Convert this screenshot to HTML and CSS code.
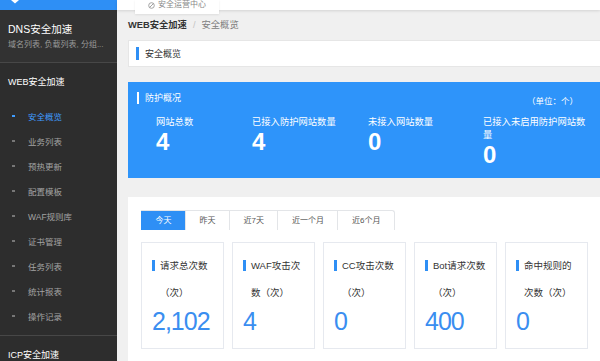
FILE: index.html
```html
<!DOCTYPE html>
<html lang="zh-CN">
<head>
<meta charset="utf-8">
<title>安全概览</title>
<link rel="stylesheet" href="styles.css">
</head>
<body>
<div class="app">
  <aside class="sidebar">
    <div class="logo-bar">
      <svg class="logo-icon" width="8" height="4" viewBox="0 0 8 4"><path d="M0 0 H8 L4 3.5 Z" fill="#fff"/></svg>
    </div>
    <div class="dns">
      <div class="group-title">DNS安全加速</div>
      <div class="dns-sub">域名列表, 负载列表, 分组...</div>
    </div>
    <div class="web">
      <div class="group-title">WEB安全加速</div>
      <ul class="menu">
        <li class="active"><span class="dot"></span>安全概览</li>
        <li><span class="dot"></span>业务列表</li>
        <li><span class="dot"></span>预热更新</li>
        <li><span class="dot"></span>配置模板</li>
        <li><span class="dot"></span>WAF规则库</li>
        <li><span class="dot"></span>证书管理</li>
        <li><span class="dot"></span>任务列表</li>
        <li><span class="dot"></span>统计报表</li>
        <li><span class="dot"></span>操作记录</li>
      </ul>
    </div>
    <div class="icp">ICP安全加速</div>
  </aside>
  <main class="main">
    <header class="topbar">
      <div class="topbar-tab">
        <svg width="7" height="7" viewBox="0 0 7 7"><circle cx="3.5" cy="3.5" r="2.8" fill="none" stroke="#999" stroke-width="0.9"/><path d="M1.5 5.5 L5.5 1.5" stroke="#999" stroke-width="0.9"/></svg>
        <span>安全运营中心</span>
      </div>
    </header>
    <div class="content">
      <div class="breadcrumb"><b>WEB安全加速</b><span class="sep">/</span><span>安全概览</span></div>
      <div class="page-title"><span class="bar"></span>安全概览</div>
      <section class="overview">
        <div class="ov-head">
          <div class="ov-title">防护概况</div>
          <div class="ov-unit">（单位：个）</div>
        </div>
        <div class="ov-stats">
          <div><div class="ov-label">网站总数</div><div class="ov-num">4</div></div>
          <div><div class="ov-label">已接入防护网站数量</div><div class="ov-num">4</div></div>
          <div><div class="ov-label">未接入网站数量</div><div class="ov-num">0</div></div>
          <div><div class="ov-label">已接入未启用防护网站数量</div><div class="ov-num">0</div></div>
        </div>
      </section>
      <section class="stats-panel">
        <div class="tabs">
          <div class="tab active">今天</div>
          <div class="tab">昨天</div>
          <div class="tab">近7天</div>
          <div class="tab">近一个月</div>
          <div class="tab">近6个月</div>
        </div>
        <div class="cards">
          <div class="card"><div class="card-title"><span class="bar"></span><span>请求总次数<br>（次）</span></div><div class="card-num">2,102</div></div>
          <div class="card"><div class="card-title"><span class="bar"></span><span>WAF攻击次<br>数（次）</span></div><div class="card-num">4</div></div>
          <div class="card"><div class="card-title"><span class="bar"></span><span>CC攻击次数<br>（次）</span></div><div class="card-num">0</div></div>
          <div class="card"><div class="card-title"><span class="bar"></span><span>Bot请求次数<br>（次）</span></div><div class="card-num">400</div></div>
          <div class="card"><div class="card-title"><span class="bar"></span><span>命中规则的<br>次数（次）</span></div><div class="card-num">0</div></div>
        </div>
      </section>
    </div>
  </main>
</div>
</body>
</html>
```
FILE: styles.css
```css
* { box-sizing: border-box; margin: 0; padding: 0; }
html, body { width: 600px; height: 361px; overflow: hidden; }
body {
  font-family: "Liberation Sans", "Noto Sans CJK SC", sans-serif;
  background: #f0f0f0;
}
.app { display: flex; height: 361px; }

/* sidebar */
.sidebar { width: 117px; flex: none; background: #2d2d2d; color: #fff; overflow: hidden; }
.logo-bar { height: 10px; background: #2e8ff5; padding-left: 11px; display: flex; align-items: flex-start; }
.logo-icon { display: block; }
.dns { background: #323232; padding: 12px 0 10px 8px; border-bottom: 1px solid #474747; }
.group-title { font-size: 10.5px; line-height: 14px; color: #fff; white-space: nowrap; }
.dns-sub { margin-top: 2px; font-size: 8px; line-height: 14px; color: #9a9a9a; white-space: nowrap; }
.web { padding: 12px 0 7px; border-bottom: 1px solid #474747; }
.web .group-title { font-size: 9px; padding-left: 8px; }
.menu { list-style: none; margin-top: 14px; }
.menu li { display: flex; align-items: center; height: 25px; padding-left: 12px; font-size: 8.5px; color: #a3a3a3; white-space: nowrap; }
.menu .dot { width: 3px; height: 2px; background: #777; margin-right: 13px; flex: none; }
.menu li.active { color: #3f9cff; }
.menu li.active .dot { background: #3f9cff; }
.icp { padding: 12px 0 0 8px; font-size: 9px; line-height: 14px; white-space: nowrap; }

/* main */
.main { flex: 1; min-width: 0; display: flex; flex-direction: column; }
.topbar { height: 10px; flex: none; background: #fff; box-shadow: 0 1px 3px rgba(0,0,0,0.12); display: flex; padding-left: 18px; position: relative; z-index: 1; }
.topbar-tab { height: 14px; width: 84px; background: #fff; display: flex; align-items: flex-start; justify-content: center; gap: 3px; font-size: 8px; line-height: 10px; color: #888; box-shadow: 0 1px 2px rgba(0,0,0,0.08); white-space: nowrap; }
.topbar-tab svg { margin-top: 1.5px; flex: none; }

.content { flex: 1; display: flex; flex-direction: column; padding: 8px 0 0 11px; }
.breadcrumb { font-size: 9.3px; line-height: 14px; color: #808080; white-space: nowrap; }
.breadcrumb b { color: #333; }
.sep { color: #c4c4c4; margin: 0 6px; }

.page-title { margin-top: 8px; height: 27px; flex: none; background: #fff; border: 1px solid #e6e6e6; border-right: 0; display: flex; align-items: center; padding-left: 7px; font-size: 9px; color: #333; }
.page-title .bar { width: 3px; height: 13px; background: #2e8ff5; margin-right: 6px; }

.overview { margin-top: 15px; height: 96px; flex: none; background: #2e94fa; color: #fff; padding: 10px 22px 10px 9px; }
.ov-head { display: flex; justify-content: space-between; align-items: flex-start; }
.ov-title { border-left: 2px solid #fff; padding-left: 6px; font-size: 9px; line-height: 12px; }
.ov-unit { margin-top: 3px; font-size: 8.5px; line-height: 12px; }
.ov-stats { display: grid; grid-template-columns: 96px 116px 115px 108px; margin-top: 9px; padding-left: 19px; }
.ov-label { font-size: 9.3px; line-height: 13px; }
.ov-num { font-size: 24px; line-height: 26px; font-weight: bold; }

.stats-panel { margin-top: 19px; flex: 1; background: #fff; padding: 13px 0 0 13px; }
.tabs { display: flex; width: max-content; border-top: 1px solid #e3e5e8; border-right: 1px solid #e3e5e8; border-radius: 0 3px 0 0; }
.tab { padding: 0 13.5px; line-height: 19px; font-size: 8px; color: #555; border-left: 1px solid #e3e5e8; white-space: nowrap; }
.tab.active { background: #2e8ff5; color: #fff; border-color: #2e8ff5; }

.cards { display: grid; grid-template-columns: repeat(5, 83px); column-gap: 8px; margin-top: 12px; }
.card { border: 1px solid #e6e9ef; padding: 9px 4px 12px 10px; }
.card-title { display: flex; align-items: flex-start; font-size: 9.5px; line-height: 27px; color: #333; white-space: nowrap; }
.card-title .bar { width: 3px; height: 11px; background: #2e8ff5; margin-top: 8px; margin-right: 5px; flex: none; }
.card-num { font-size: 25px; line-height: 30px; color: #3a8ef0; letter-spacing: -1px; }
```
